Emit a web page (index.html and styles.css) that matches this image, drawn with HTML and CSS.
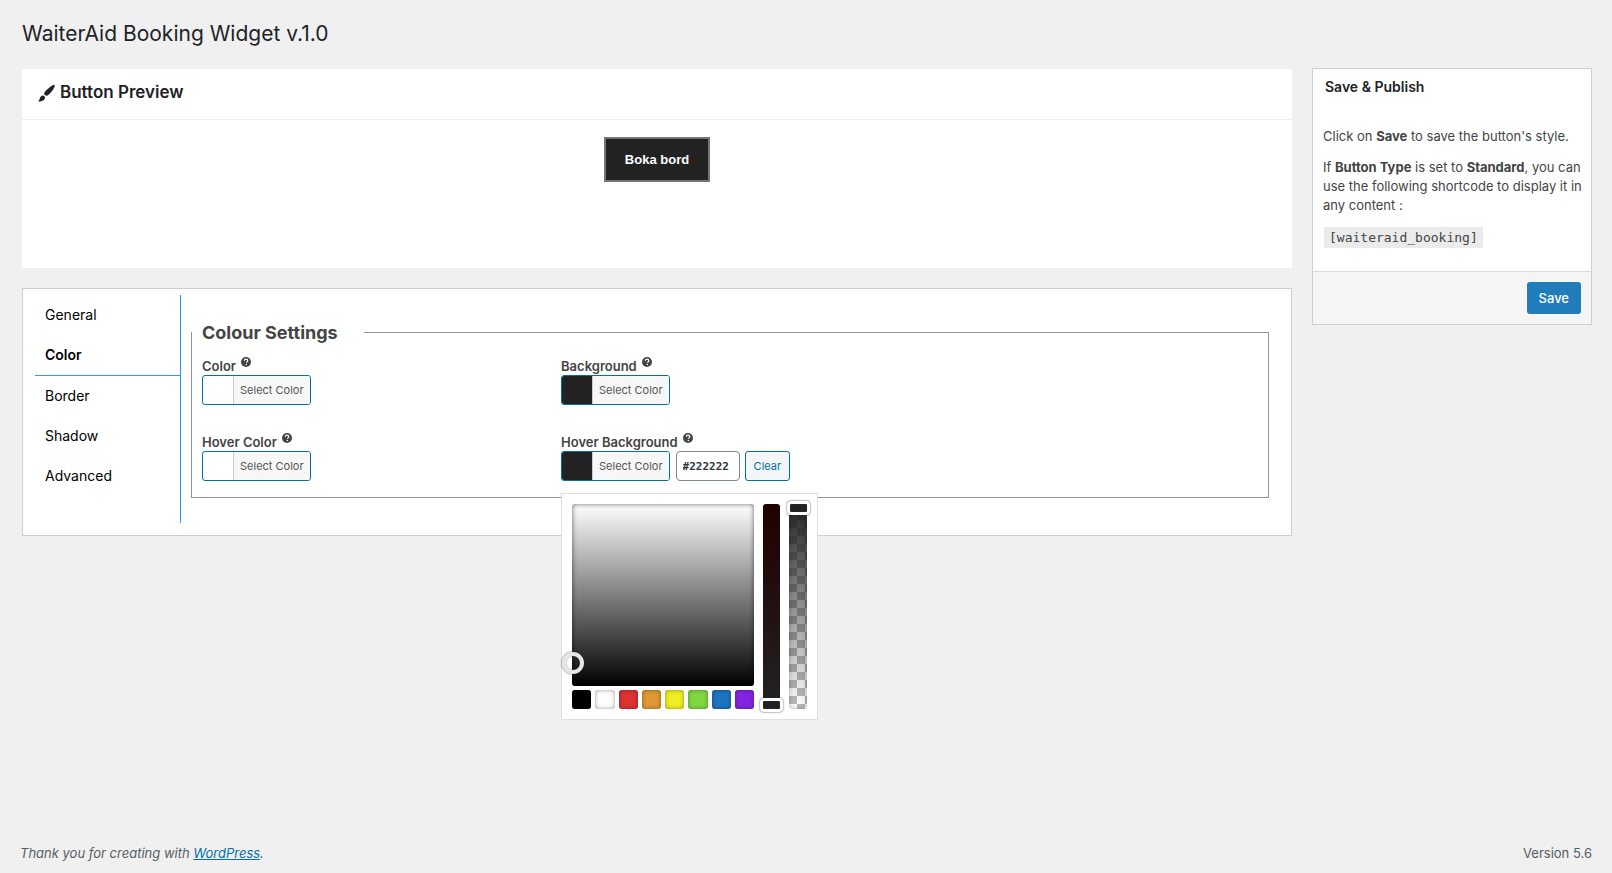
FILE: index.html
```html
<!DOCTYPE html>
<html lang="en">
<head>
<meta charset="utf-8">
<meta name="viewport" content="width=device-width, initial-scale=1">
<title>WaiterAid Booking Widget</title>
<link rel="stylesheet" href="styles.css">
</head>
<body>
<svg class="sprite" aria-hidden="true">
  <symbol id="help" viewBox="0 0 20 20">
    <circle cx="10" cy="10" r="10" fill="currentColor"/>
    <path d="M6.6 7.4C6.8 5.4 8.1 4.400 10.100 4.400c2 0 3.400 1.100 3.400 2.900 0 2.400-2.700 2.500-2.700 4.300" fill="none" stroke="#fff" stroke-width="2.400"/>
    <circle cx="10.600" cy="14.800" r="1.500" fill="#fff"/>
  </symbol>
</svg>
<h1 class="page-title">WaiterAid Booking Widget v.1.0</h1>
<div class="content">
  <main class="main">
    <section class="preview">
      <h2 class="preview-head">
        <svg class="brush" viewBox="0 0 18 18" aria-hidden="true"><path d="M17.700.4c.5.700-.4 2.600-2.200 5.100-1.700 2.300-3.900 4.700-5.400 5.500-.8.400-1.500.400-1.900.200-.8-.3-1.400-.9-1.700-1.800-.1-.6.100-1.300.7-2.100C8.600 5.500 11.200 3.100 13.500 1.500 15.800 0 17.200-.3 17.700.4zM5.300 11.200c1.100.1 2 1 2.100 2.100.1 1.500-.9 2.900-2.600 3.500-1.500.6-3.200.7-4.700.3 1-.5 1.300-1.200 1.700-2.500.5-2 1.700-3.600 3.500-3.400z" fill="currentColor"/></svg>
        Button Preview
      </h2>
      <div class="preview-body"><button class="book-button" type="button">Boka bord</button></div>
    </section>
    <section class="settings">
      <div class="tabs" role="tablist">
        <button class="tab" type="button" role="tab">General</button>
        <button class="tab tab-active" type="button" role="tab" aria-selected="true">Color</button>
        <button class="tab" type="button" role="tab">Border</button>
        <button class="tab" type="button" role="tab">Shadow</button>
        <button class="tab" type="button" role="tab">Advanced</button>
      </div>
      <fieldset class="fields">
        <legend class="legend">Colour Settings</legend>
        <div class="grid">
          <div class="field">
            <label class="label" for="color">Color <svg class="help"><use href="#help"/></svg></label>
            <button class="select-color" id="color" type="button"><span class="swatch"></span><span class="select-text">Select Color</span></button>
          </div>
          <div class="field">
            <label class="label" for="background">Background <svg class="help"><use href="#help"/></svg></label>
            <button class="select-color" id="background" type="button"><span class="swatch dark"></span><span class="select-text">Select Color</span></button>
          </div>
          <div class="field">
            <label class="label" for="hover-color">Hover Color <svg class="help"><use href="#help"/></svg></label>
            <button class="select-color" id="hover-color" type="button"><span class="swatch"></span><span class="select-text">Select Color</span></button>
          </div>
          <div class="field">
            <label class="label" for="hover-background">Hover Background <svg class="help"><use href="#help"/></svg></label>
            <div class="picker-row">
              <button class="select-color" type="button"><span class="swatch dark"></span><span class="select-text">Select Color</span></button>
              <input class="hex" id="hover-background" type="text" value="#222222">
              <button class="clear" type="button">Clear</button>
            </div>
            <div class="picker">
              <div class="picker-left">
                <div class="square"><span class="handle"></span></div>
                <div class="palette">
                  <button class="chip black" type="button" aria-label="Black"></button>
                  <button class="chip white" type="button" aria-label="White"></button>
                  <button class="chip red" type="button" aria-label="Red"></button>
                  <button class="chip orange" type="button" aria-label="Orange"></button>
                  <button class="chip yellow" type="button" aria-label="Yellow"></button>
                  <button class="chip green" type="button" aria-label="Green"></button>
                  <button class="chip blue" type="button" aria-label="Blue"></button>
                  <button class="chip purple" type="button" aria-label="Purple"></button>
                </div>
              </div>
              <div class="strip saturation"><input class="slider" type="range" min="0" max="100" value="0" aria-label="Saturation"></div>
              <div class="strip alpha"><input class="slider" type="range" min="0" max="100" value="100" aria-label="Opacity"></div>
            </div>
          </div>
        </div>
      </fieldset>
    </section>
  </main>
  <aside class="publish">
    <h2 class="publish-head">Save &amp; Publish</h2>
    <div class="publish-body">
      <p>Click on <b>Save</b> to save the button's style.</p>
      <p>If <b>Button Type</b> is set to <b>Standard</b>, you can use the following shortcode to display it in any content :</p>
      <p><code class="code">[waiteraid_booking]</code></p>
    </div>
    <div class="publish-foot"><button class="save" type="button">Save</button></div>
  </aside>
</div>
<footer class="footer">
  <p class="thanks">Thank you for creating with <a href="#">WordPress</a>.</p>
  <p>Version 5.6</p>
</footer>
</body>
</html>
```
FILE: styles.css
```css
* { box-sizing: border-box; }
body {
  margin: 0;
  min-height: 100vh;
  display: flex;
  flex-direction: column;
  background: #f0f0f0;
  color: #444;
  font: 13px/19px Inter, sans-serif;
}
button, input { font-family: inherit; margin: 0; }
h1, h2, p { margin: 0; }
.sprite { display: none; }
.page-title {
  padding: 19px 22px 19px;
  font-size: 21px;
  font-weight: 400;
  line-height: 30px;
  color: #1d2327;
}
.content {
  display: flex;
  align-items: flex-start;
  gap: 20px;
  padding: 0 20px 0 22px;
}
.main { flex: 1; min-width: 0; padding-top: 1px; }
.preview { background: #fff; margin-bottom: 20px; }
.preview-head {
  display: flex;
  align-items: center;
  gap: 5px;
  height: 51px;
  padding: 0 17px 3px 16px;
  border-bottom: 1px solid #eee;
  font-size: 17px;
  font-weight: 600;
  color: #1d2327;
}
.brush { width: 17px; height: 17px; margin-top: 2px; }
.preview-body { min-height: 148px; padding-top: 17px; text-align: center; }
.book-button {
  height: 45px;
  padding: 0 19px;
  border: 2px solid #757575;
  background: #222;
  color: #fff;
  font: bold 13px "Liberation Sans", sans-serif;
}
.settings {
  display: flex;
  gap: 10px;
  padding: 6px 22px 12px 12px;
  border: 1px solid #ccd0d4;
  background: #fff;
}
.tabs {
  display: flex;
  flex-direction: column;
  width: 146px;
  border-right: 1px solid #269bf0;
}
.tab {
  height: 40px;
  padding: 0 10px 1px;
  border: 0;
  background: none;
  color: #000;
  font-size: 14px;
  text-align: left;
}
.tab-active { height: 41px; border-bottom: 1px solid #269bf0; font-weight: 600; }
.fields {
  flex: 1;
  min-width: 0;
  margin: 24px 0 25px;
  padding: 10px 0 16px;
  border: 1px solid #919394;
}
.legend { padding: 0 26px 0 10px; font-size: 18px; line-height: 27px; font-weight: 700; }
.grid { display: grid; grid-template-columns: 34% 1fr; row-gap: 27px; padding: 0 10px; }
.field { position: relative; }
.label { display: flex; align-items: center; gap: 5px; height: 19px; padding-top: 2px; font-weight: 600; }
.help { width: 10px; height: 10px; margin-bottom: 10px; }
.select-color {
  display: flex;
  height: 30px;
  padding: 0;
  overflow: hidden;
  border: 1px solid #0071a1;
  border-radius: 3px;
  background: #fff;
  color: #555;
  font-size: 11px;
  line-height: 28px;
}
.swatch { width: 30px; height: 28px; }
.dark { background: #222; }
.select-text { padding: 0 6px; border-left: 1px solid #ccc; background: #f7f7f7; }
.picker-row { display: flex; }
.hex {
  width: 64px;
  height: 30px;
  margin: 0 5px 0 6px;
  padding: 0 6px;
  border: 1px solid #7e8993;
  border-radius: 4px;
  background: #fff;
  color: #32373c;
  font: bold 11px "DejaVu Sans Mono", monospace;
}
.clear {
  height: 30px;
  padding: 0 8px;
  border: 1px solid #0071a1;
  border-radius: 3px;
  background: #f3f5f6;
  color: #0071a1;
  font-size: 11px;
}
.picker {
  position: absolute;
  z-index: 2;
  top: 61px;
  left: 0;
  display: flex;
  gap: 9px;
  padding: 10px;
  border: 1px solid #dfdfdf;
  background: #fff;
}
.picker-left { display: grid; gap: 4px; width: 182px; }
.square {
  position: relative;
  height: 182px;
  border-radius: 3px;
  background: linear-gradient(#fff, #000);
  box-shadow: inset 0 0 5px rgba(0, 0, 0, 0.6);
}
.handle {
  position: absolute;
  left: -10px;
  bottom: 12px;
  width: 22px;
  height: 22px;
  border: 4px solid #e6e6e6;
  border-radius: 50%;
  box-shadow: 0 0 2px #333, inset 0 0 1px #333;
}
.palette { display: flex; gap: 4px; }
.chip {
  flex: 1;
  height: 19px;
  padding: 0;
  border: 0;
  border-radius: 3px;
  box-shadow: inset 0 0 4px rgba(0, 0, 0, 0.4);
}
.black { background: #000; }
.white { background: #fff; }
.red { background: #dd3333; }
.orange { background: #dd9933; }
.yellow { background: #eeee22; }
.green { background: #81d742; }
.blue { background: #1e73be; }
.purple { background: #8224e3; }
.strip { position: relative; width: 17px; height: 205px; border-radius: 3px; }
.saturation { background: linear-gradient(#220000, #222); }
.alpha {
  width: 18px;
  background:
    linear-gradient(#222, rgba(34, 34, 34, 0)),
    repeating-conic-gradient(#fff 0 25%, #bbb 0 50%) 0 0 / 16px 16px;
  box-shadow: inset 0 0 5px rgba(0, 0, 0, 0.3);
}
.slider {
  position: absolute;
  top: -3px;
  left: -3px;
  width: calc(100% + 6px);
  height: calc(100% + 6px);
  margin: 0;
  appearance: none;
  background: none;
  writing-mode: vertical-lr;
  direction: rtl;
}
.slider::-webkit-slider-thumb {
  appearance: none;
  width: 23px;
  height: 14px;
  border: 3px solid #fff;
  border-radius: 4px;
  background: #222;
  box-shadow: 0 0 2px #333, inset 0 0 1px #555;
}
.publish {
  width: 280px;
  border: 1px solid #ccd0d4;
  background: #fff;
}
.publish-head {
  padding: 8px 12px;
  font-size: 14px;
  line-height: 20px;
  font-weight: 600;
  color: #1d2327;
}
.publish-body {
  display: grid;
  gap: 12px;
  padding: 22px 4px 23px 10px;
}
.code {
  display: inline-block;
  margin-left: 1px;
  padding: 1px 5px;
  background: #ebebeb;
  font: 13px/19px "DejaVu Sans Mono", monospace;
}
.publish-foot {
  display: flex;
  justify-content: flex-end;
  padding: 10px;
  border-top: 1px solid #dcdcde;
  background: #f5f5f5;
}
.save {
  height: 32px;
  padding: 0 12px;
  border: 0;
  border-radius: 3px;
  background: #207cba;
  color: #fff;
  font-size: 13px;
  font-weight: 500;
}
.footer {
  display: flex;
  justify-content: space-between;
  margin-top: auto;
  padding: 10px 20px;
  color: #555d66;
}
.thanks { font-style: italic; }
.thanks a { color: #0073aa; }
```
